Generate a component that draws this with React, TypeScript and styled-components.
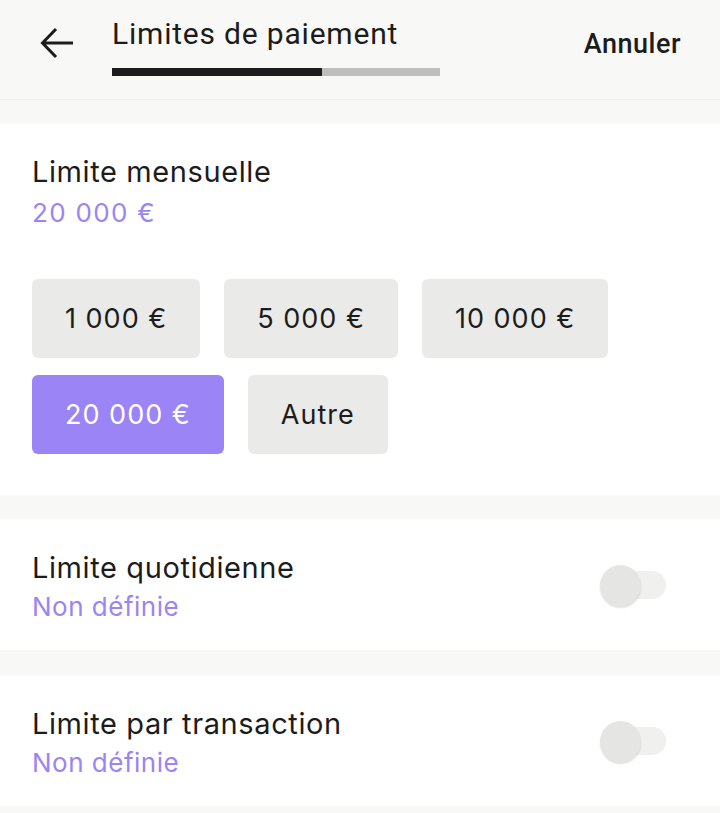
import React, { useState } from "react";
import styled, { createGlobalStyle } from "styled-components";

const Global = createGlobalStyle`
  html, body { margin: 0; padding: 0; background: #f8f8f6; }
  body { font-family: Inter, "Noto Sans", sans-serif; color: #1c1c1c; -webkit-font-smoothing: antialiased; }
  * { box-sizing: border-box; }
`;

const Page = styled.div`
  width: 720px;
  min-height: 813px;
  background: #f8f8f6;
  display: flex;
  flex-direction: column;
`;

const Header = styled.header`
  height: 100px;
  border-bottom: 1px solid #efefec;
  display: flex;
  align-items: flex-start;
  padding: 0 39px 0 40px;
`;

const BackButton = styled.button`
  margin-top: 27px;
  width: 33px;
  height: 32px;
  padding: 0;
  border: 0;
  background: none;
  display: flex;
  align-items: center;
  justify-content: flex-start;
  cursor: pointer;
`;

const TitleBlock = styled.div`
  margin-left: 39px;
  display: flex;
  flex-direction: column;
`;

const Title = styled.h1`
  margin: 14px 0 0;
  font-family: Roboto, Inter, sans-serif;
  font-weight: 400;
  font-size: 30px;
  letter-spacing: 0.8px;
  line-height: 40px;
  color: #1c1c1c;
`;

const Progress = styled.div`
  margin-top: 14px;
  width: 328px;
  height: 8px;
  background: #bebebd;
  display: flex;
`;

const ProgressFill = styled.div`
  height: 100%;
  background: #1c1c1c;
`;

const Cancel = styled.button`
  margin-left: auto;
  margin-top: 26px;
  border: 0;
  background: none;
  padding: 0;
  font-family: Roboto, Inter, sans-serif;
  font-weight: 500;
  font-size: 27px;
  letter-spacing: 0.5px;
  line-height: 36px;
  color: #1c1c1c;
  cursor: pointer;
`;

const Card = styled.section<{ $top: number; $pt: number; $pb: number }>`
  margin-top: ${(p) => p.$top}px;
  background: #ffffff;
  padding: ${(p) => p.$pt}px 32px ${(p) => p.$pb}px;
`;

const Row = styled.div`
  display: flex;
  align-items: center;
  justify-content: space-between;
`;

const Label = styled.div`
  font-size: 29px;
  line-height: 36px;
  font-weight: 400;
  color: #1c1c1c;
  letter-spacing: 0.6px;
`;

const Value = styled.div<{ $gap?: number; $spacing?: number }>`
  margin-top: ${(p) => p.$gap ?? 0}px;
  font-size: 26px;
  line-height: 42px;
  letter-spacing: ${(p) => p.$spacing ?? 0.5}px;
  color: #9b84f5;
`;

const Options = styled.div`
  margin-top: 45px;
  display: flex;
  flex-wrap: wrap;
  gap: 17px 24px;
  max-width: 600px;
`;

const Option = styled.button<{ $active?: boolean }>`
  height: 79px;
  padding: 0 33px;
  border: 0;
  border-radius: 6px;
  background: ${(p) => (p.$active ? "#9b84f5" : "#eaeae9")};
  color: ${(p) => (p.$active ? "#ffffff" : "#1c1c1c")};
  font-family: Inter, sans-serif;
  font-size: 27px;
  letter-spacing: 1px;
  cursor: pointer;
`;

const Track = styled.div`
  position: relative;
  width: 64px;
  height: 28px;
  border-radius: 14px;
  background: #f0f0ef;
  margin-right: 22px;
  margin-bottom: 8px;
`;

const Knob = styled.div`
  position: absolute;
  left: -2px;
  top: -6px;
  width: 41px;
  height: 41px;
  border-radius: 50%;
  background: #e5e5e4;
  box-shadow: 0 2px 2px rgba(0, 0, 0, 0.12);
`;

const Toggle = () => (
  <Track>
    <Knob />
  </Track>
);

const amounts = ["1 000 €", "5 000 €", "10 000 €", "20 000 €", "Autre"];

export default function App() {
  const [selected, setSelected] = useState("20 000 €");
  return (
    <Page>
      <Global />
      <Header>
        <BackButton aria-label="Retour">
          <svg width="33" height="32" viewBox="0 0 33 32" fill="none">
            <path d="M33 16H3M16 2L2.5 16 16 30" stroke="#1c1c1c" strokeWidth="3" />
          </svg>
        </BackButton>
        <TitleBlock>
          <Title>Limites de paiement</Title>
          <Progress>
            <ProgressFill style={{ width: "64%" }} />
          </Progress>
        </TitleBlock>
        <Cancel>Annuler</Cancel>
      </Header>

      <Card $top={23} $pt={31} $pb={41}>
        <Label>Limite mensuelle</Label>
        <Value $gap={2} $spacing={1.3}>{selected}</Value>
        <Options>
          {amounts.map((a) => (
            <Option key={a} $active={a === selected} onClick={() => setSelected(a)}>
              {a}
            </Option>
          ))}
        </Options>
      </Card>

      <Card $top={24} $pt={31} $pb={22}>
        <Row>
          <div>
            <Label>Limite quotidienne</Label>
            <Value>Non définie</Value>
          </div>
          <Toggle />
        </Row>
      </Card>

      <Card $top={25} $pt={31} $pb={22}>
        <Row>
          <div>
            <Label>Limite par transaction</Label>
            <Value>Non définie</Value>
          </div>
          <Toggle />
        </Row>
      </Card>
    </Page>
  );
}
